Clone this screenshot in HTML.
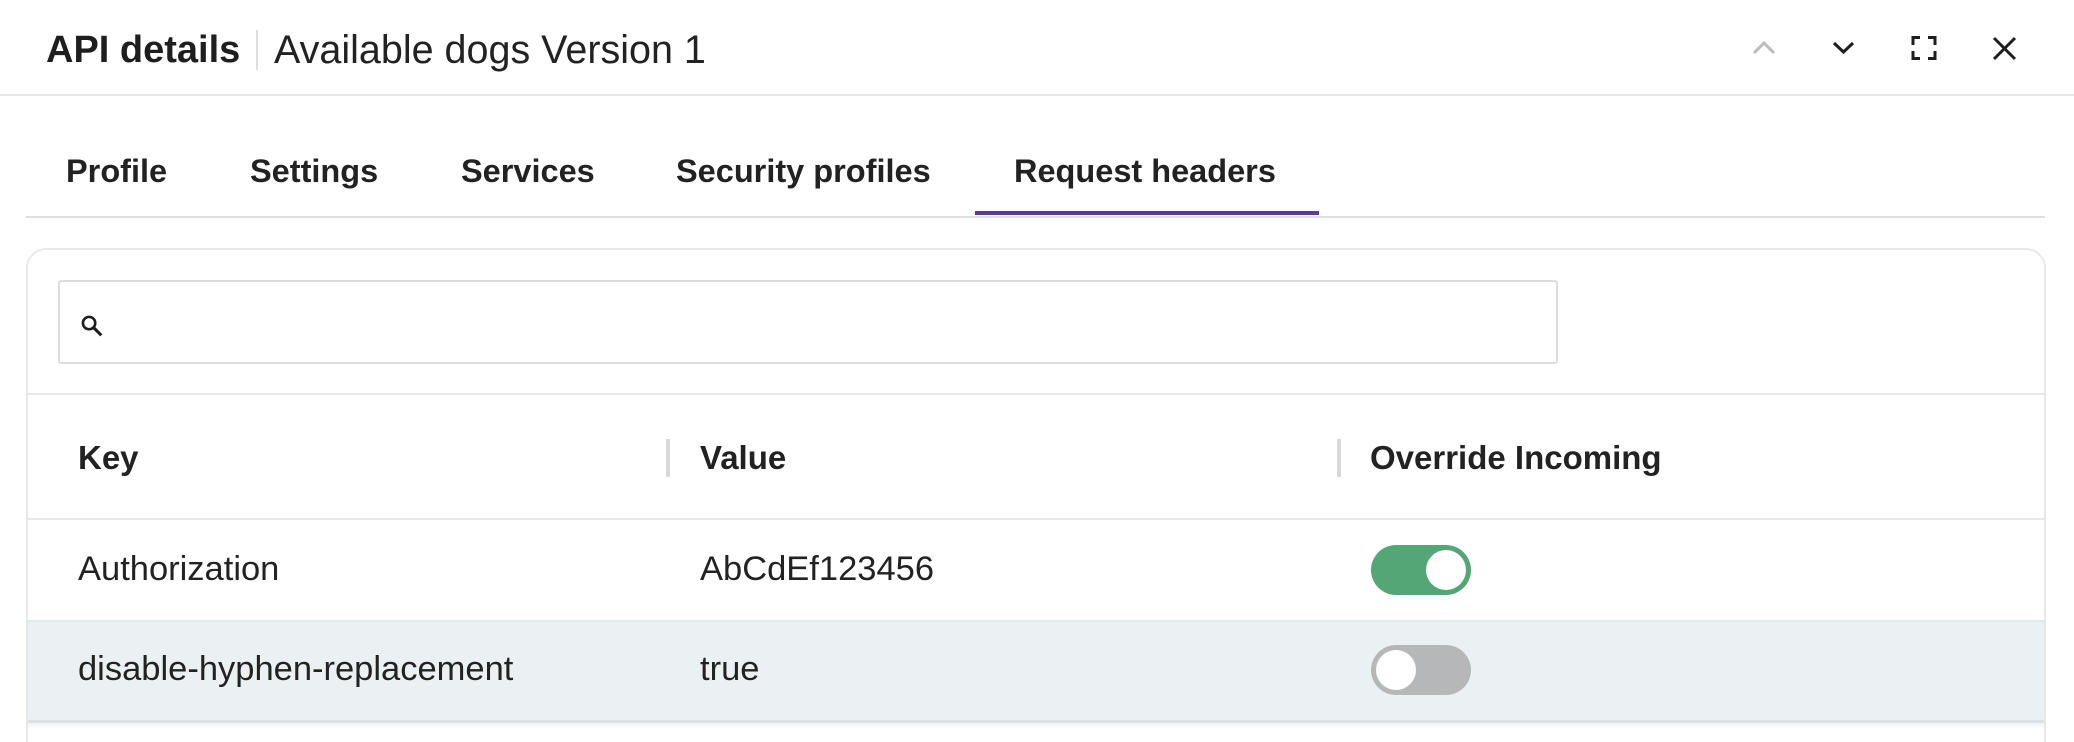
<!DOCTYPE html>
<html><head><meta charset="utf-8"><style>
*{box-sizing:border-box;margin:0;padding:0}
html,body{width:2074px;height:742px;overflow:hidden;background:#fff;font-family:"Liberation Sans",Arial,sans-serif;color:#222}
#w{position:relative;width:2074px;height:742px;overflow:hidden}
.abs{position:absolute}
.t{position:absolute;white-space:nowrap;line-height:1}
</style></head><body><div id="w">
<div class="t" style="left:46px;top:31px;font-size:38px;font-weight:bold;color:#1e1e1e">API details</div>
<div class="abs" style="left:256px;top:30px;width:2px;height:40px;background:#ddd"></div>
<div class="t" style="left:274px;top:31px;font-size:39.5px;color:#222">Available dogs Version 1</div>
<svg class="abs" style="left:1745px;top:30px" width="300" height="40" viewBox="1745 30 300 40">
<path d="M1754 53 L1764 43 L1774 53" fill="none" stroke="#bbb" stroke-width="3"/>
<path d="M1834 43 L1843.5 52 L1853 43" fill="none" stroke="#1e1e1e" stroke-width="3"/>
<path d="M1913 45 V37.5 H1920 M1928 37.5 H1935 V45 M1935 51 V58.5 H1928 M1920 58.5 H1913 V51" fill="none" stroke="#1e1e1e" stroke-width="3"/>
<path d="M1994 38 L2015 59 M2015 38 L1994 59" fill="none" stroke="#1e1e1e" stroke-width="3"/>
</svg>
<div class="abs" style="left:0;top:94px;width:2074px;height:2px;background:#e6e6e6"></div>

<div class="t" style="left:66px;top:155px;font-size:32.5px;font-weight:bold">Profile</div>
<div class="t" style="left:250px;top:155px;font-size:32.5px;font-weight:bold">Settings</div>
<div class="t" style="left:461px;top:155px;font-size:32.5px;font-weight:bold">Services</div>
<div class="t" style="left:676px;top:155px;font-size:32.5px;font-weight:bold">Security profiles</div>
<div class="t" style="left:1014px;top:155px;font-size:32.5px;font-weight:bold">Request headers</div>
<div class="abs" style="left:26px;top:216px;width:2019px;height:2px;background:#e0e0e0"></div>
<div class="abs" style="left:975px;top:211px;width:344px;height:4px;background:#5b3a9e"></div>

<div class="abs" style="left:26px;top:248px;width:2020px;height:494px;border:2px solid #e8e8e8;border-bottom:none;border-radius:20px 20px 0 0"></div>
<div class="abs" style="left:58px;top:280px;width:1500px;height:84px;border:2px solid #dcdcdc;border-radius:3px"></div>
<svg class="abs" style="left:78px;top:312px" width="28" height="28" viewBox="0 0 24 24"><circle cx="9.5" cy="9.5" r="5.3" fill="none" stroke="#1e1e1e" stroke-width="2.2"/><path d="M13.5 13.5 L20 20" stroke="#1e1e1e" stroke-width="2.6"/></svg>
<div class="abs" style="left:28px;top:393px;width:2016px;height:2px;background:#e8e8e8"></div>

<div class="t" style="left:78px;top:441px;font-size:33px;font-weight:bold">Key</div>
<div class="abs" style="left:666px;top:439px;width:4px;height:38px;background:#d8d8d8"></div>
<div class="t" style="left:700px;top:441px;font-size:33px;font-weight:bold">Value</div>
<div class="abs" style="left:1337px;top:439px;width:4px;height:38px;background:#d8d8d8"></div>
<div class="t" style="left:1370px;top:441px;font-size:33px;font-weight:bold">Override Incoming</div>
<div class="abs" style="left:28px;top:518px;width:2016px;height:2px;background:#e8e8e8"></div>

<div class="t" style="left:78px;top:552px;font-size:34.5px">Authorization</div>
<div class="t" style="left:700px;top:552px;font-size:34.5px">AbCdEf123456</div>
<div class="abs" style="left:1371px;top:545px;width:100px;height:50px;border-radius:25px;background:#55a677"></div>
<div class="abs" style="left:1426px;top:550px;width:40px;height:40px;border-radius:50%;background:#fff"></div>

<div class="abs" style="left:28px;top:620px;width:2016px;height:100px;background:#ebf0f2;border-top:2px solid #e4e8ea"></div>
<div class="t" style="left:78px;top:652px;font-size:34.5px">disable-hyphen-replacement</div>
<div class="t" style="left:700px;top:652px;font-size:34.5px">true</div>
<div class="abs" style="left:1371px;top:645px;width:100px;height:50px;border-radius:25px;background:#b6b7b9"></div>
<div class="abs" style="left:1376px;top:650px;width:40px;height:40px;border-radius:50%;background:#fff"></div>
<div class="abs" style="left:28px;top:720px;width:2016px;height:3px;background:#dde0e2;box-shadow:0 2px 3px rgba(0,0,0,.08)"></div>
</div></body></html>
